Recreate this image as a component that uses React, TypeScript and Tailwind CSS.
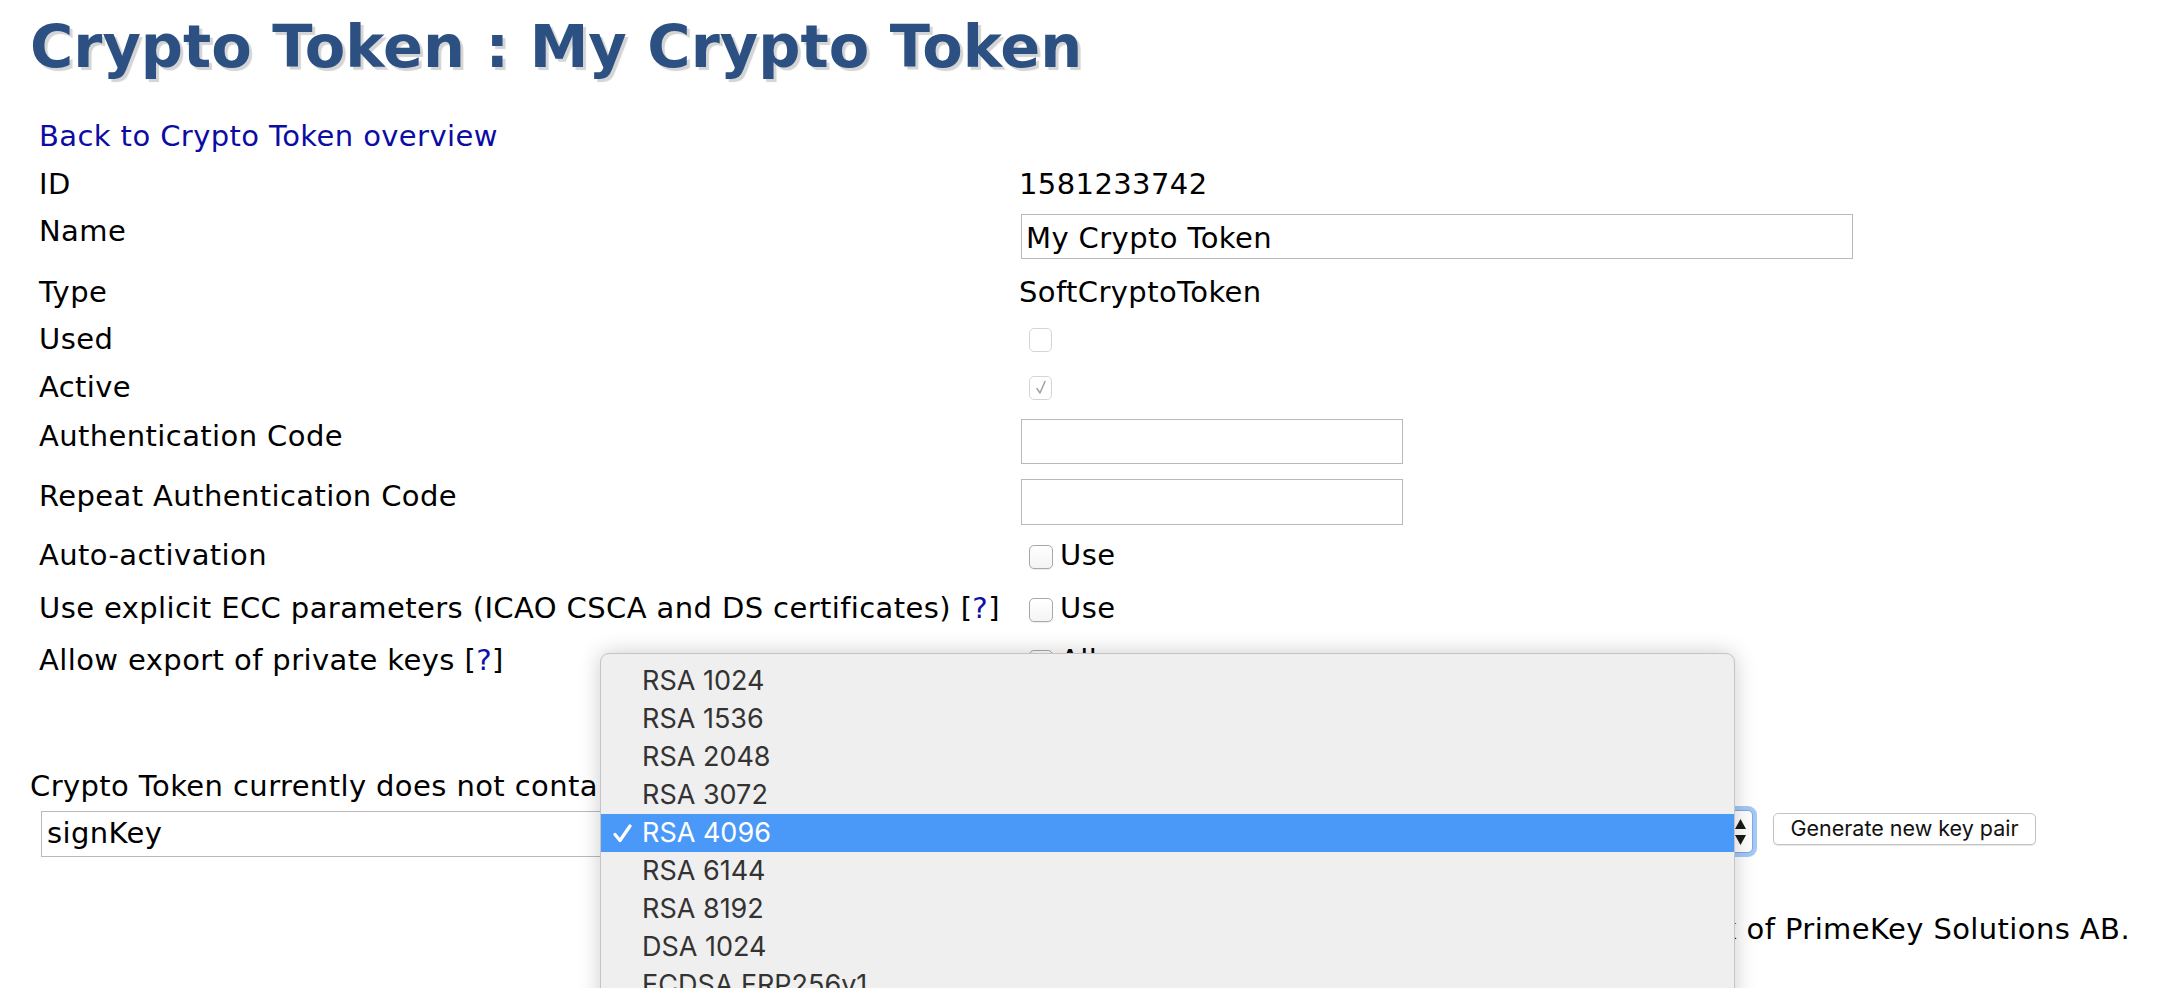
import React from "react";

function Row({ h, label, children }: { h: string; label: React.ReactNode; children?: React.ReactNode }) {
  return (
    <div className={`flex items-start ${h}`}>
      <div className="w-[980px] shrink-0 leading-[35px]">{label}</div>
      <div className="flex-1 leading-[35px]">{children}</div>
    </div>
  );
}

function DisabledBox({ checked }: { checked?: boolean }) {
  return (
    <div className="flex h-[35px] items-center">
      <span className="ml-[10px] flex h-[24px] w-[23px] items-center justify-center rounded-[5px] border border-[#d5d5d5] bg-white">
        {checked && (
          <svg width="12" height="15" viewBox="0 0 12 15" fill="none">
            <path d="M2 8.5 L5 13 L10 1.5" stroke="#a0a0a0" strokeWidth="1.5" strokeLinecap="round" strokeLinejoin="round" />
          </svg>
        )}
      </span>
    </div>
  );
}

function CheckLabel({ text }: { text: string }) {
  return (
    <div className="flex h-[35px] items-center">
      <span className="ml-[10px] mt-[2px] h-[24px] w-[24px] rounded-[5px] border border-[#a9a9a9] bg-gradient-to-b from-white to-[#f4f4f4] shadow-[0_1px_1px_rgba(0,0,0,0.08)]" />
      <span className="ml-[7px]">{text}</span>
    </div>
  );
}

function Help() {
  return (
    <span>
      [<span className="text-[#1010a8]">?</span>]
    </span>
  );
}

const options = [
  "RSA 1024",
  "RSA 1536",
  "RSA 2048",
  "RSA 3072",
  "RSA 4096",
  "RSA 6144",
  "RSA 8192",
  "DSA 1024",
  "ECDSA FRP256v1",
  "ECDSA brainpoolP160r1",
  "ECDSA brainpoolP192r1",
];

export default function App() {
  return (
    <div className="relative h-[988px] w-full overflow-hidden bg-white font-['DejaVu_Sans','Verdana',sans-serif] text-[29px] tracking-[0.4px] text-black">
      <div className="px-[30px]">
        <h1 className="mt-[12px] h-[70px] text-[59px] font-bold leading-[70px] tracking-normal whitespace-nowrap text-[#2b5081] [text-shadow:3px_3px_1px_#d4d4d4]">
          Crypto Token : My Crypto Token
        </h1>

        <div className="mt-[37px] pl-[9px]">
          <div className="flex h-[48px] items-start leading-[35px]">
            <a className="text-[#0c0ca4]">Back to Crypto Token overview</a>
          </div>
          <Row h="h-[47px]" label="ID">1581233742</Row>
          <Row h="h-[61px]" label="Name">
            <div className="ml-[2px] flex h-[45px] w-[832px] items-center border border-[#b9b9b9] bg-white pl-[4px] pt-[3px]">My Crypto Token</div>
          </Row>
          <Row h="h-[47px]" label="Type">SoftCryptoToken</Row>
          <Row h="h-[48px]" label="Used">
            <DisabledBox />
          </Row>
          <Row h="h-[49px]" label="Active">
            <DisabledBox checked />
          </Row>
          <Row h="h-[60px]" label="Authentication Code">
            <div className="ml-[2px] h-[45px] w-[382px] border border-[#b9b9b9] bg-white" />
          </Row>
          <Row h="h-[59px]" label="Repeat Authentication Code">
            <div className="ml-[2px] h-[46px] w-[382px] border border-[#b9b9b9] bg-white" />
          </Row>
          <Row h="h-[53px]" label="Auto-activation">
            <CheckLabel text="Use" />
          </Row>
          <Row
            h="h-[52px]"
            label={
              <span>
                Use explicit ECC parameters (ICAO CSCA and DS certificates) <Help />
              </span>
            }
          >
            <CheckLabel text="Use" />
          </Row>
          <Row
            h="h-[126px]"
            label={
              <span>
                Allow export of private keys <Help />
              </span>
            }
          >
            <CheckLabel text="Allow" />
          </Row>
        </div>

        <p className="h-[35px] leading-[35px] whitespace-nowrap">Crypto Token currently does not contain any keys.</p>

        <div className="mt-[7px] flex items-start">
          <div className="ml-[11px] flex h-[46px] w-[620px] shrink-0 items-center border border-[#b9b9b9] bg-white pl-[5px]">signKey</div>
          <div className="ml-[10px] -mt-[1px] flex h-[43px] w-[1082px] shrink-0 items-center justify-end rounded-[5px] border border-[#7fa9e0] bg-white pr-[5px] shadow-[0_0_0_4px_rgba(90,155,240,0.55)]">
            <svg width="13" height="30" viewBox="0 0 13 30">
              <path d="M6.5 2 L12 12 L1 12 Z" fill="#1a1a1a" />
              <path d="M1 18 L12 18 L6.5 28 Z" fill="#1a1a1a" />
            </svg>
          </div>
          <button className="ml-[20px] mt-[2px] h-[32px] w-[263px] shrink-0 rounded-[5px] border border-[#c3c3c3] bg-white font-['Inter',sans-serif] text-[21.5px] leading-none tracking-normal text-[#111] shadow-[0_1px_1px_rgba(0,0,0,0.1)]">
            Generate new key pair
          </button>
        </div>

        <div className="mt-[55px] pr-[10px] text-right leading-[35px] whitespace-nowrap">
          EJBCA® is a registered trademark of PrimeKey Solutions AB.
        </div>
      </div>

      <div className="absolute left-[600px] top-[653px] h-[420px] w-[1135px] rounded-t-[9px] border border-[#c4c4c4] bg-[#efefef] pt-[8px] font-['Inter',sans-serif] text-[27px] tracking-normal text-[#333] shadow-[0_0_22px_rgba(0,0,0,0.2)]">
        {options.map((o) => {
          const sel = o === "RSA 4096";
          return (
            <div key={o} className={sel ? "flex h-[38px] items-center bg-[#4a99f8] text-white" : "flex h-[38px] items-center"}>
              <span className="flex w-[41px] shrink-0 justify-center pl-[2px]">
                {sel && (
                  <svg width="19" height="19" viewBox="0 0 19 19" fill="none">
                    <path d="M2 10.5 L7 16.5 L17 2" stroke="white" strokeWidth="3.2" strokeLinecap="round" strokeLinejoin="round" />
                  </svg>
                )}
              </span>
              <span>{o}</span>
            </div>
          );
        })}
      </div>
    </div>
  );
}
